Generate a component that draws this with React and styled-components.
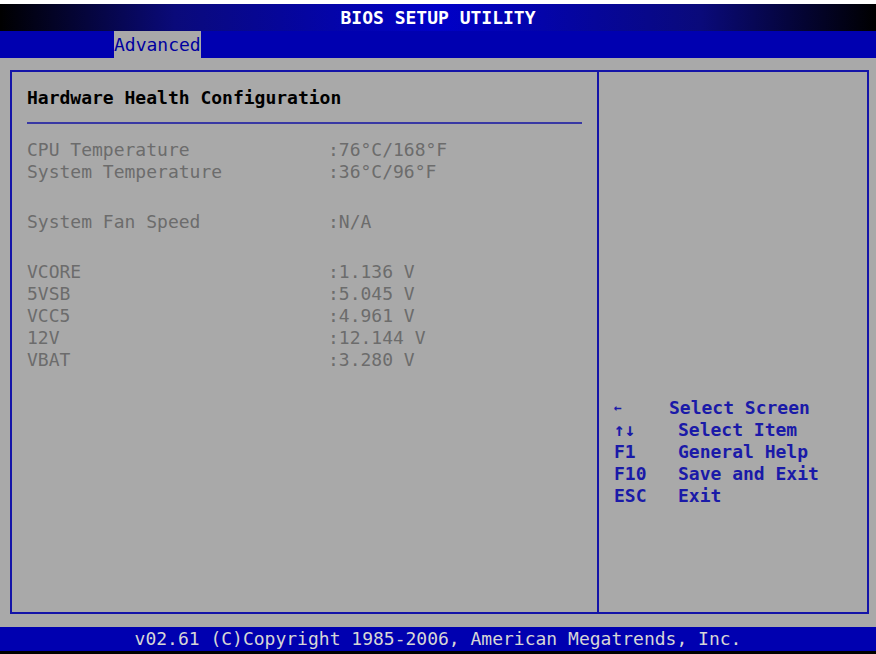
import React from 'react';
import styled, { createGlobalStyle } from 'styled-components';

const Global = createGlobalStyle`
  html, body {
    margin: 0;
    padding: 0;
    background: #000;
  }
  body {
    font-family: 'DejaVu Sans Mono', 'Liberation Mono', monospace;
    font-size: 18px;
  }
`

const Screen = styled.div`
  width: 876px;
  height: 654px;
  display: flex;
  flex-direction: column;
  background: #a9a9a9;
  overflow: hidden;
`

const TitleBar = styled.div`
  height: 27px;
  border-top: 4px solid #fff;
  background: linear-gradient(90deg, #000 0%, #0a0a7a 20%, #0000c8 50%, #0a0a7a 80%, #000 100%);
  display: flex;
  align-items: center;
  justify-content: center;
  color: #fff;
  font-weight: bold;
  line-height: 27px;
`

const MenuBar = styled.div`
  height: 27px;
  background: #0000b0;
  display: flex;
  align-items: flex-end;
  padding-left: 114px;
`

const Tab = styled.div`
  height: 27px;
  line-height: 28px;
  background: ${p => (p.$active ? '#a9a9a9' : 'transparent')};
  color: ${p => (p.$active ? '#0000a0' : '#fff')};
`

const Body = styled.div`
  flex: 1;
  padding: 12px 7px 13px 10px;
  display: flex;
`

const Frame = styled.div`
  flex: 1;
  border: 2px solid #1414a8;
  display: grid;
  grid-template-columns: 587px 1fr;
`

const Main = styled.div`
  border-right: 2px solid #1414a8;
  padding: 15px 15px 0 15px;
`

const Heading = styled.div`
  color: #000;
  font-weight: bold;
  line-height: 22px;
`

const Rule = styled.div`
  height: 2px;
  background: #3838a4;
  margin: 13px 0 15px;
`

const Row = styled.div`
  display: grid;
  grid-template-columns: 301px 1fr;
  height: 22px;
  line-height: 22px;
  color: #6c6c6c;
  white-space: pre;
`

const Gap = styled.div`
  height: 28px;
`

const Help = styled.div`
  display: flex;
  flex-direction: column;
  justify-content: flex-end;
  padding: 0 0 105px 15px;
`

const HelpRow = styled.div`
  display: grid;
  grid-template-columns: 64px 1fr;
  height: 22px;
  line-height: 22px;
  color: #1a1aa8;
  font-weight: bold;
  white-space: pre;
`

const Key = styled.span`
  font-size: ${p => (p.$small ? '13px' : '18px')};
`

const Desc = styled.span`
  margin-left: ${p => (p.$pull ? '-9px' : '0')};
`

const Footer = styled.div`
  height: 24px;
  border-bottom: 3px solid #000;
  background: #0000b0;
  color: #d6d6d6;
  display: flex;
  align-items: center;
  justify-content: center;
  line-height: 24px;
`

const readings = [
  ['CPU Temperature', ':76°C/168°F'],
  ['System Temperature', ':36°C/96°F'],
  null,
  ['System Fan Speed', ':N/A'],
  null,
  ['VCORE', ':1.136 V'],
  ['5VSB', ':5.045 V'],
  ['VCC5', ':4.961 V'],
  ['12V', ':12.144 V'],
  ['VBAT', ':3.280 V'],
]

const keys = [
  { key: '←', text: 'Select Screen', small: true, pull: true },
  { key: '↑↓', text: 'Select Item' },
  { key: 'F1', text: 'General Help' },
  { key: 'F10', text: 'Save and Exit' },
  { key: 'ESC', text: 'Exit' },
]

export default function App() {
  return (
    <Screen>
      <Global />
      <TitleBar>BIOS SETUP UTILITY</TitleBar>
      <MenuBar>
        <Tab $active>Advanced</Tab>
      </MenuBar>
      <Body>
        <Frame>
          <Main>
            <Heading>Hardware Health Configuration</Heading>
            <Rule />
            {readings.map((r, i) =>
              r ? (
                <Row key={i}>
                  <span>{r[0]}</span>
                  <span>{r[1]}</span>
                </Row>
              ) : (
                <Gap key={i} />
              )
            )}
          </Main>
          <Help>
            {keys.map(k => (
              <HelpRow key={k.key}>
                <Key $small={k.small}>{k.key}</Key>
                <Desc $pull={k.pull}>{k.text}</Desc>
              </HelpRow>
            ))}
          </Help>
        </Frame>
      </Body>
      <Footer>v02.61 (C)Copyright 1985-2006, American Megatrends, Inc.</Footer>
    </Screen>
  );
}
